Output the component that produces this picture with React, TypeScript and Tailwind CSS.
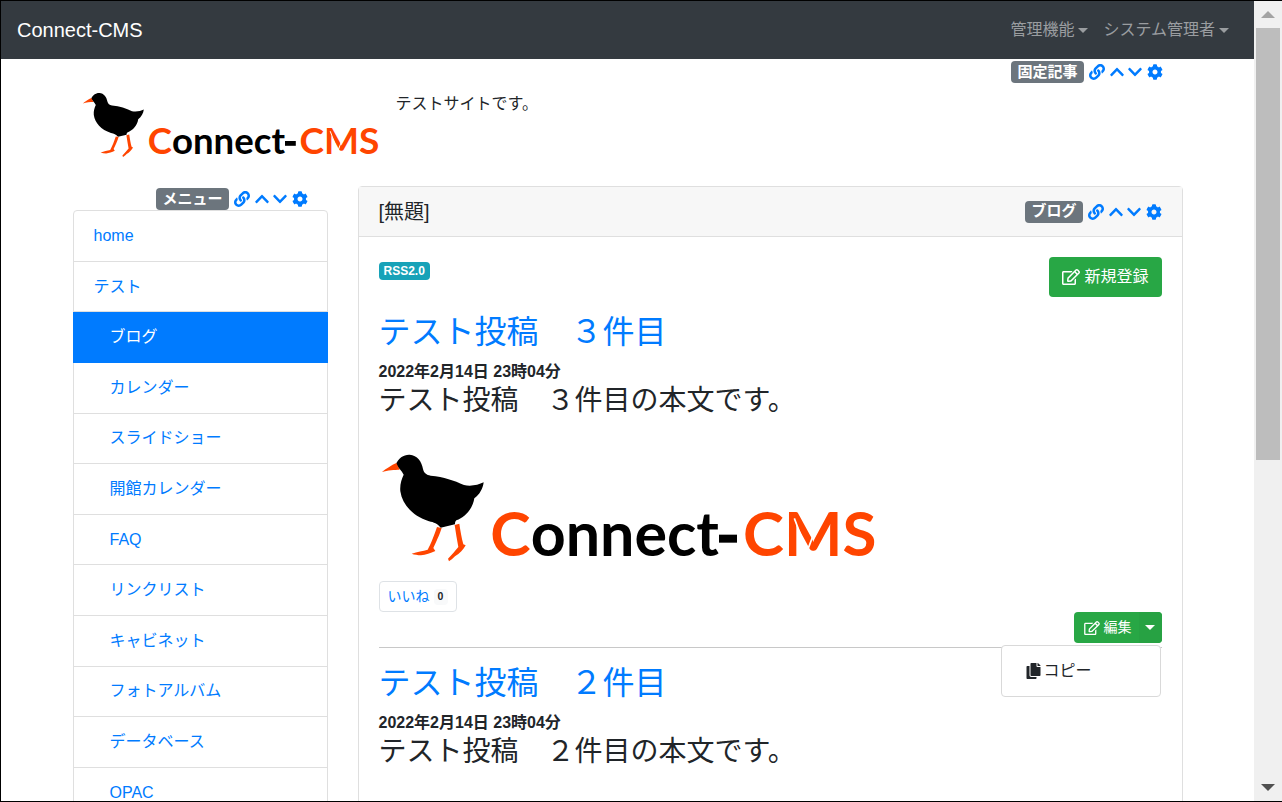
import { FaLink, FaChevronUp, FaChevronDown, FaCog, FaRegEdit, FaCopy } from 'react-icons/fa';

const menuItems = [
  { label: 'home', nested: false },
  { label: 'テスト', nested: false },
  { label: 'ブログ', nested: true, active: true },
  { label: 'カレンダー', nested: true },
  { label: 'スライドショー', nested: true },
  { label: '開館カレンダー', nested: true },
  { label: 'FAQ', nested: true },
  { label: 'リンクリスト', nested: true },
  { label: 'キャビネット', nested: true },
  { label: 'フォトアルバム', nested: true },
  { label: 'データベース', nested: true },
  { label: 'OPAC', nested: true },
];

function Logo({ className }: { className: string }) {
  return (
    <svg viewBox="30 40 1500 360" className={className}>
      <path
        d="M80 75 C88 55 105 44 122 45 C145 47 158 65 162 88 C165 100 172 106 185 108 C225 112 255 122 285 136 C305 141 328 136 344 128 C342 146 332 165 316 176 C312 205 290 232 262 242 C258 246 258 250 258 254 L215 264 C205 252 195 248 180 245 C130 228 100 195 94 155 C92 135 98 118 104 105 C98 92 88 84 80 75 Z"
        fill="#000"
      />
      <path d="M39 97 C50 88 68 76 82 70 L92 90 C78 90 55 92 39 97 Z" fill="#ff4500" />
      <path
        d="M204 262 L218 265 C212 285 200 310 193 325 L199 334 C185 340 170 346 156 347 C146 346 136 345 128 342 C145 336 162 334 176 330 C186 312 196 285 204 262 Z"
        fill="#ff4500"
      />
      <path
        d="M257 256 L271 252 C274 272 278 295 283 314 L290 317 C284 328 272 342 258 350 C252 356 245 362 240 365 L237 357 C248 346 258 334 268 322 C264 300 260 278 257 256 Z"
        fill="#ff4500"
      />
      <g fontFamily="Lato, sans-serif" fontWeight="700" fontSize="182">
        <text x="364" y="348" textLength="686" lengthAdjust="spacingAndGlyphs">
          <tspan fill="#ff4500">C</tspan>
          <tspan fill="#000">onnect</tspan>
        </text>
        <rect x="1050" y="285" width="54" height="24" fill="#000" />
        <text x="1122" y="348" fill="#ff4500" textLength="400" lengthAdjust="spacingAndGlyphs">CMS</text>
      </g>
      <path d="M1276 236 L1314 336 L1352 236" fill="none" stroke="#fff" strokeWidth="5" />
    </svg>
  );
}

function FrameControls({ label }: { label: string }) {
  return (
    <div className="flex items-center">
      <span className="flex h-[22px] items-center rounded-[4px] bg-[#6c757d] px-[6px] text-[15px] font-bold text-white">
        {label}
      </span>
      <div className="ml-[5px] flex items-center text-[#007bff]">
        <FaLink className="h-[16px] w-[16px]" />
        <FaChevronUp className="ml-[5px] h-[16px] w-[14px]" />
        <FaChevronDown className="ml-[4px] h-[16px] w-[14px]" />
        <FaCog className="ml-[5px] h-[16px] w-[16px]" />
      </div>
    </div>
  );
}

function Caret({ className }: { className: string }) {
  return <span className={`inline-block border-x-[5px] border-t-[5px] border-x-transparent ${className}`} />;
}

function Post({ count }: { count: string }) {
  return (
    <div>
      <h2 className="text-[32px] leading-[38px] text-[#007bff]">テスト投稿　{count}件目</h2>
      <p className="mt-[9px] text-[16px] leading-[24px] font-bold text-[#212529]">2022年2月14日 23時04分</p>
      <p className="text-[28px] leading-[34px] text-[#212529]">テスト投稿　{count}件目の本文です。</p>
    </div>
  );
}

export default function App() {
  return (
    <div className="flex h-[802px] w-[1282px] overflow-hidden border-y border-l border-black bg-white font-['Liberation_Sans','Noto_Sans_CJK_JP',sans-serif] text-[#212529]">
      <div className="min-w-0 flex-1 overflow-hidden">
        <nav className="flex h-[58px] items-center justify-between bg-[#343a40] pr-[25px] pl-[16px]">
          <span className="text-[20px] text-white">Connect-CMS</span>
          <div className="flex items-center text-[16px] text-[#9a9da0]">
            <span>管理機能</span>
            <Caret className="ml-[4px] border-t-[#9a9da0]" />
            <span className="ml-[15px]">システム管理者</span>
            <Caret className="ml-[4px] border-t-[#9a9da0]" />
          </div>
        </nav>

        <div className="mx-auto w-[1110px]">
          <header className="h-[127px]">
            <div className="flex justify-end pt-[2px] pr-[20px]">
              <FrameControls label="固定記事" />
            </div>
            <div className="mt-[9px] flex">
              <div className="w-[323px] pl-[8px]">
                <Logo className="h-[72px] w-[300px]" />
              </div>
              <p className="text-[16px] leading-[24px]">テストサイトです。</p>
            </div>
          </header>

          <div className="flex gap-[30px]">
            <aside className="w-[255px]">
              <div className="flex justify-end pt-[2.2px] pr-[20px]">
                <FrameControls label="メニュー" />
              </div>
              <ul className="rounded-t-[4px] border border-[#dfdfdf] text-[16px]">
                {menuItems.map((item) => (
                  <li
                    key={item.label}
                    className={`flex h-[50.6px] items-center border-b ${
                      item.nested ? 'pl-[36px]' : 'pl-[20px]'
                    } ${item.active ? '-mx-px border-[#007bff] bg-[#007bff] pl-[37px] text-white' : 'border-[#dfdfdf] text-[#007bff]'}`}
                  >
                    {item.label}
                  </li>
                ))}
              </ul>
            </aside>

            <main className="h-[700px] w-[825px] rounded-t-[4px] border border-[#dfdfdf]">
              <div className="flex h-[50px] items-center justify-between border-b border-[#dfdfdf] bg-[#f7f7f7] px-[20px]">
                <span className="text-[20px]">[無題]</span>
                <FrameControls label="ブログ" />
              </div>
              <div className="px-[20px] pt-[20px]">
                <div className="flex items-start justify-between">
                  <span className="mt-[5px] flex h-[18px] items-center rounded-[4px] bg-[#17a2b8] px-[5px] text-[12px] font-bold text-white">
                    RSS2.0
                  </span>
                  <button className="flex h-[40px] items-center gap-[4px] rounded-[4px] bg-[#28a745] px-[13px] text-[16px] text-white">
                    <FaRegEdit className="h-[16px] w-[18px]" />
                    新規登録
                  </button>
                </div>
                <div className="mt-[16px]">
                  <Post count="３" />
                </div>
                <div className="mt-[35px]">
                  <Logo className="h-[120px] w-[500px]" />
                </div>
                <div className="mt-[8px] flex h-[31px] w-[78px] items-center rounded-[4px] border border-[#dee2e6] pl-[8px] text-[14px] text-[#007bff]">
                  いいね
                  <span className="ml-[4px] flex h-[16px] w-[14px] items-center justify-center rounded-[4px] bg-[#f8f9fa] text-[10.5px] font-bold text-[#212529]">
                    0
                  </span>
                </div>
                <div className="relative border-b border-[#c8c8c8] pb-[4px]">
                  <div className="flex justify-end">
                    <div className="flex h-[31px] overflow-hidden rounded-[4px] bg-[#28a745] text-[14px] text-white">
                      <span className="flex w-[65px] items-center gap-[4px] pl-[10px]">
                        <FaRegEdit className="h-[14px] w-[16px]" />
                        編集
                      </span>
                      <span className="flex w-[23px] items-center justify-center bg-[#27a243]">
                        <Caret className="border-t-white" />
                      </span>
                    </div>
                  </div>
                  <div className="absolute top-[33px] right-[1px] z-10 flex h-[52px] w-[160px] items-center rounded-[4px] border border-[#d9d9d9] bg-white pl-[24px] text-[16px]">
                    <FaCopy className="h-[16px] w-[15px]" />
                    <span className="ml-[3px]">コピー</span>
                  </div>
                </div>
                <div className="mt-[15.5px]">
                  <Post count="２" />
                </div>
              </div>
            </main>
          </div>
        </div>
      </div>

      <div className="flex w-[28px] shrink-0 flex-col items-center bg-[#f0f0f0]">
        <div className="flex h-[27px] w-full items-center justify-center">
          <span className="border-x-[7px] border-b-[7px] border-x-transparent border-b-[#a3a3a3]" />
        </div>
        <div className="h-[432px] w-[24px] bg-[#bdbdbd]" />
        <div className="mt-auto flex h-[27px] w-full items-center justify-center">
          <span className="border-x-[7px] border-t-[7px] border-x-transparent border-t-[#505050]" />
        </div>
      </div>
    </div>
  );
}
